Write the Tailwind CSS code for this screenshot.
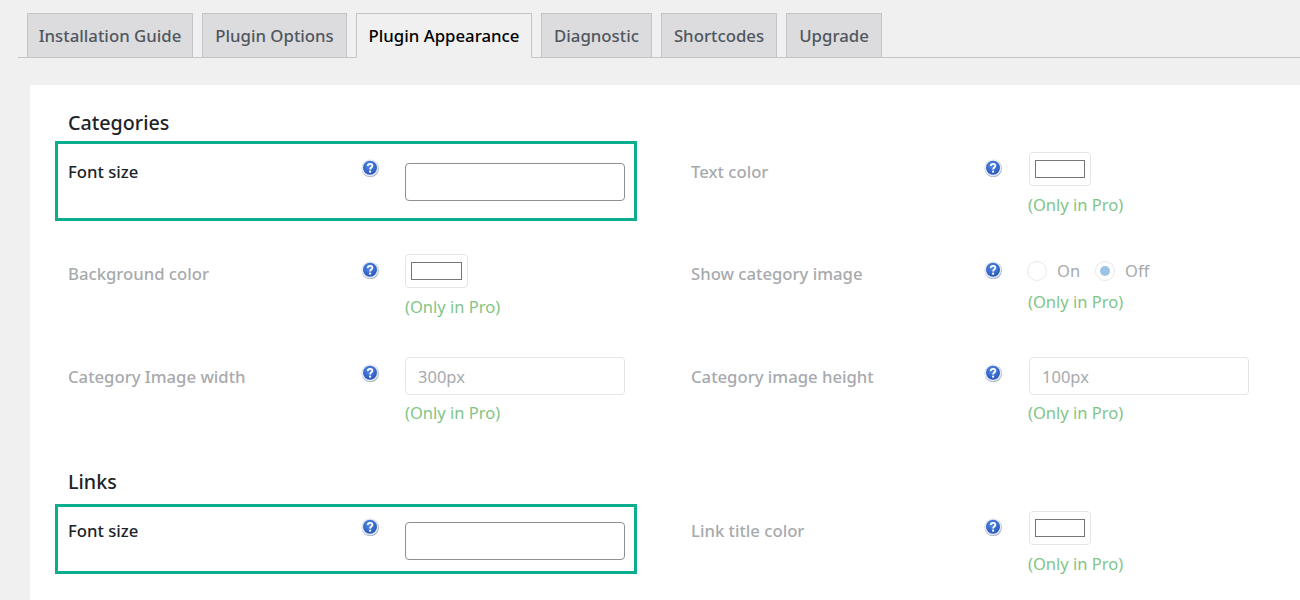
<!DOCTYPE html>
<html lang="en">
  <head>
    <meta charset="UTF-8" />
    <title>Plugin Appearance</title>
    <script src="https://cdn.jsdelivr.net/npm/@tailwindcss/browser@4"></script>
  </head>
  <body class="bg-[#f0f0f1] font-['Noto_Sans',sans-serif] overflow-hidden h-[600px]">
    <svg class="absolute w-0 h-0">
      <defs>
        <radialGradient id="ball" cx="45%" cy="35%" r="70%">
          <stop offset="0%" stop-color="#5a8fe6" />
          <stop offset="100%" stop-color="#2150b8" />
        </radialGradient>
        <symbol id="help" viewBox="0 0 18 18">
          <circle cx="9.3" cy="9.5" r="8.7" fill="#aeb9cc" />
          <circle cx="8.9" cy="8.8" r="8.4" fill="#e6ebf4" />
          <circle cx="9" cy="8.8" r="7" fill="url(#ball)" />
          <path d="M6.7 7c.1-1.4 1.1-2.2 2.4-2.2s2.3.8 2.3 2c0 1.7-2.3 1.8-2.3 3.6" fill="none" stroke="#fff" stroke-width="1.8" />
          <circle cx="9.1" cy="12.7" r="1.1" fill="#fff" />
        </symbol>
      </defs>
    </svg>

    <!-- tabs -->
    <div class="ml-[18px] pt-[13px] pl-[9px] flex gap-[9px] border-b border-[#c3c4c7] h-[58px] text-[16.8px] font-medium leading-[44px]">
      <a class="w-[166px] h-[45px] text-center border border-[#c3c4c7] bg-[#dcdcde] text-[#50575e]">Installation Guide</a>
      <a class="w-[145px] h-[45px] text-center border border-[#c3c4c7] bg-[#dcdcde] text-[#50575e]">Plugin Options</a>
      <a class="w-[176px] h-[45px] text-center border border-[#c3c4c7] border-b-[#f0f0f1] bg-[#f0f0f1] text-black">Plugin Appearance</a>
      <a class="w-[111px] h-[45px] text-center border border-[#c3c4c7] bg-[#dcdcde] text-[#50575e]">Diagnostic</a>
      <a class="w-[116px] h-[45px] text-center border border-[#c3c4c7] bg-[#dcdcde] text-[#50575e]">Shortcodes</a>
      <a class="w-[96px] h-[45px] text-center border border-[#c3c4c7] bg-[#dcdcde] text-[#50575e]">Upgrade</a>
    </div>

    <!-- panel -->
    <div class="ml-[30px] mt-[27px] bg-white h-[515px] pl-[38px] text-[16.7px] font-medium">
      <h2 class="pt-[24px] h-[56px] text-[19.7px] leading-[27px] text-[#1d2327]">Categories</h2>

      <div class="grid grid-cols-[623px_1fr] h-[102px]">
        <div class="-ml-[13px] w-[582px] h-[80px] border-[3px] border-[#0aae8f] pl-[10px] pt-[16px] flex items-start text-[#1d2327]">
          <span class="w-[293px] leading-[24px]">Font size</span>
          <svg class="w-[18px] h-[18px] mt-[-1px]"><use href="#help" /></svg>
          <input class="ml-[26px] mt-[3px] w-[220px] h-[38px] border border-[#8c8f94] rounded-[4px] bg-white" />
        </div>
        <div class="pt-[11px] flex items-start text-[#a7aaad]">
          <span class="w-[293px] leading-[24px] mt-[8px]">Text color</span>
          <svg class="w-[18px] h-[18px] mt-[7px]"><use href="#help" /></svg>
          <div class="ml-[27px]">
            <div class="w-[62px] h-[34px] border border-[#e4e5e7] rounded-[4px] flex items-center justify-center"><div class="w-[50px] h-[18px] border border-[#777] bg-white"></div></div>
            <p class="mt-[8px] text-[16.5px] font-normal leading-[22px] text-[#7fc587] -ml-[1px]">(Only in Pro)</p>
          </div>
        </div>
      </div>

      <div class="grid grid-cols-[623px_1fr] h-[104px]">
        <div class="pt-[11px] flex items-start text-[#a7aaad]">
          <span class="w-[293px] leading-[24px] mt-[8px]">Background color</span>
          <svg class="w-[18px] h-[18px] mt-[7px]"><use href="#help" /></svg>
          <div class="ml-[26px]">
            <div class="w-[63px] h-[34px] border border-[#e4e5e7] rounded-[4px] flex items-center justify-center"><div class="w-[51px] h-[18px] border border-[#777] bg-white"></div></div>
            <p class="mt-[8px] text-[16.5px] font-normal leading-[22px] text-[#7fc587]">(Only in Pro)</p>
          </div>
        </div>
        <div class="pt-[11px] flex items-start text-[#a7aaad]">
          <span class="w-[293px] leading-[24px] mt-[8px]">Show category image</span>
          <svg class="w-[18px] h-[18px] mt-[7px]"><use href="#help" /></svg>
          <div class="ml-[25px]">
            <div class="flex items-center h-[34px] text-[16.5px] font-normal text-[#a7aaad]">
              <span class="w-[20px] h-[20px] rounded-full border border-[#e8e9eb]"></span>
              <span class="ml-[10px]">On</span>
              <span class="ml-[15px] w-[20px] h-[20px] rounded-full border border-[#e8e9eb] flex items-center justify-center"><span class="w-[10px] h-[10px] rounded-full bg-[#9cc3e6]"></span></span>
              <span class="ml-[10px]">Off</span>
            </div>
            <p class="mt-[3px] text-[16.5px] font-normal leading-[22px] text-[#7fc587] ml-[1px]">(Only in Pro)</p>
          </div>
        </div>
      </div>

      <div class="grid grid-cols-[623px_1fr] h-[116px]">
        <div class="pt-[10px] flex items-start text-[#a7aaad]">
          <span class="w-[293px] leading-[24px] mt-[8px]">Category Image width</span>
          <svg class="w-[18px] h-[18px] mt-[7px]"><use href="#help" /></svg>
          <div class="ml-[26px]">
            <input disabled value="300px" class="w-[220px] h-[38px] px-[12px] border border-[#e4e5e7] rounded-[4px] bg-white text-[16.5px] font-normal text-[#a7aaad]" />
            <p class="mt-[7px] text-[16.5px] font-normal leading-[22px] text-[#7fc587]">(Only in Pro)</p>
          </div>
        </div>
        <div class="pt-[10px] flex items-start text-[#a7aaad]">
          <span class="w-[293px] leading-[24px] mt-[8px]">Category image height</span>
          <svg class="w-[18px] h-[18px] mt-[7px]"><use href="#help" /></svg>
          <div class="ml-[27px]">
            <input disabled value="100px" class="w-[220px] h-[38px] px-[12px] border border-[#e4e5e7] rounded-[4px] bg-white text-[16.5px] font-normal text-[#a7aaad]" />
            <p class="mt-[7px] text-[16.5px] font-normal leading-[22px] text-[#7fc587] -ml-[1px]">(Only in Pro)</p>
          </div>
        </div>
      </div>

      <h2 class="h-[41px] pt-[5px] text-[19.7px] leading-[27px] text-[#1d2327]">Links</h2>

      <div class="grid grid-cols-[623px_1fr]">
        <div class="-ml-[13px] w-[582px] h-[70px] border-[3px] border-[#0aae8f] pl-[10px] pt-[11px] flex items-start text-[#1d2327]">
          <span class="w-[293px] leading-[24px] mt-[1px]">Font size</span>
          <svg class="w-[18px] h-[18px]"><use href="#help" /></svg>
          <input class="ml-[26px] mt-[4px] w-[220px] h-[38px] border border-[#8c8f94] rounded-[4px] bg-white" />
        </div>
        <div class="pt-[7px] flex items-start text-[#a7aaad]">
          <span class="w-[293px] leading-[24px] mt-[8px]">Link title color</span>
          <svg class="w-[18px] h-[18px] mt-[7px]"><use href="#help" /></svg>
          <div class="ml-[27px]">
            <div class="w-[62px] h-[34px] border border-[#e4e5e7] rounded-[4px] flex items-center justify-center"><div class="w-[50px] h-[18px] border border-[#777] bg-white"></div></div>
            <p class="mt-[8px] text-[16.5px] font-normal leading-[22px] text-[#7fc587] -ml-[1px]">(Only in Pro)</p>
          </div>
        </div>
      </div>
    </div>
  </body>
</html>
